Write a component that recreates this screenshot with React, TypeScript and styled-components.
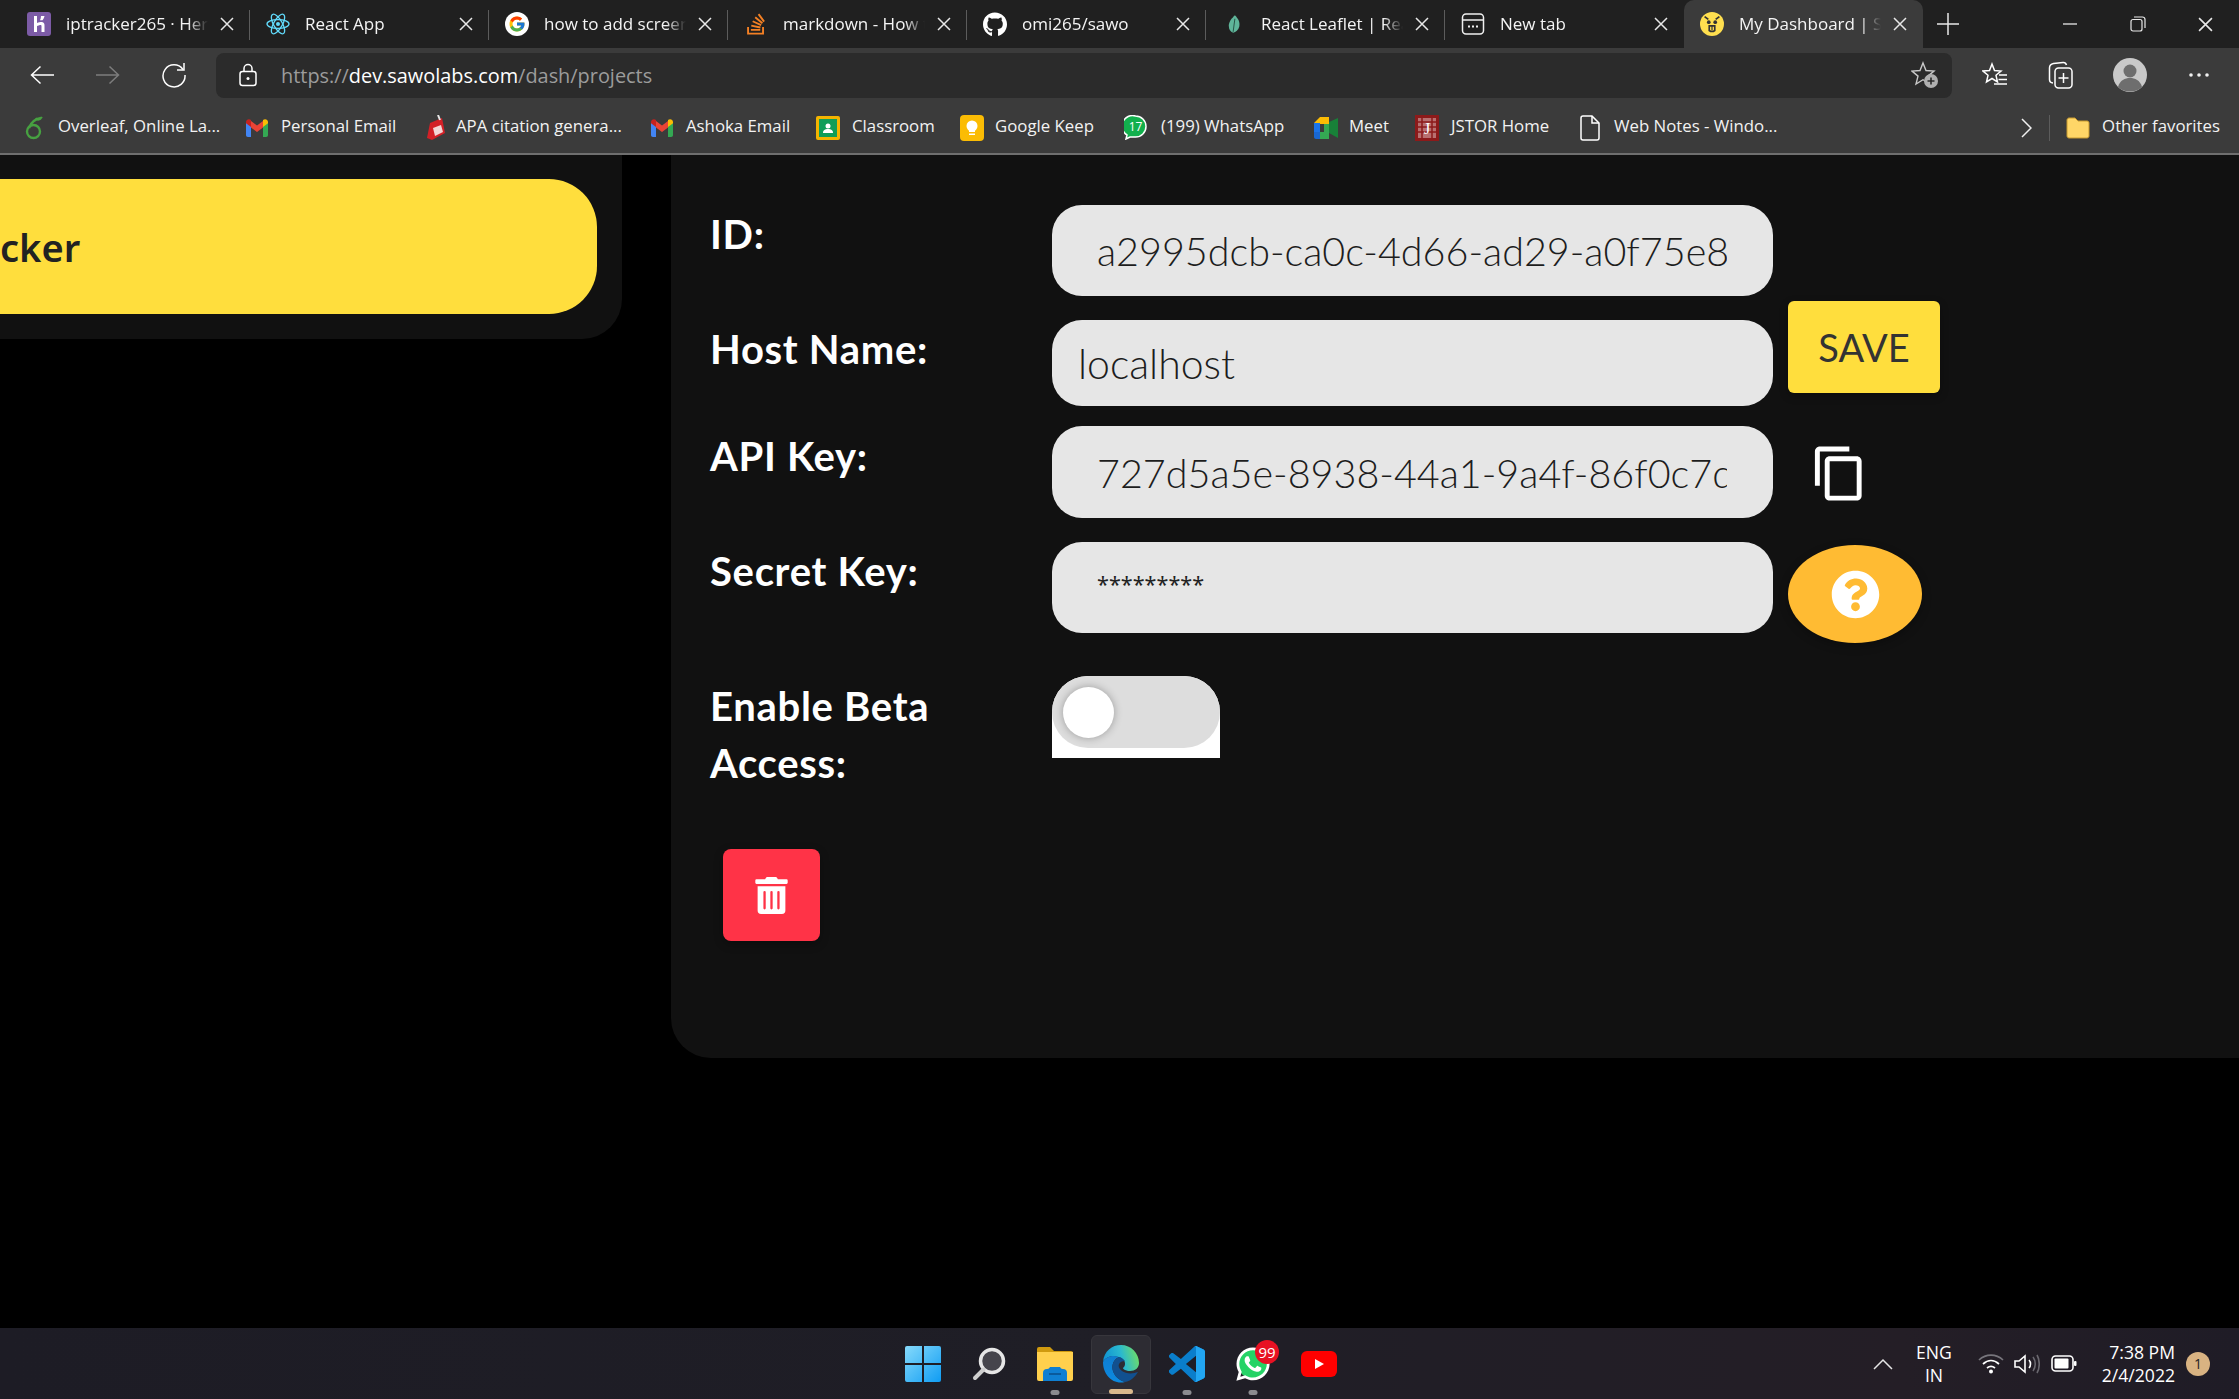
import React from "react";
import styled, { createGlobalStyle } from "styled-components";
import { FaGithub, FaQuestionCircle, FaStackOverflow, FaTrashAlt, FaWhatsapp } from "react-icons/fa";
import { MdContentCopy } from "react-icons/md";

const Global = createGlobalStyle`
  html, body { margin: 0; padding: 0; background: #000; }
  * { box-sizing: border-box; }
`;

const UI = `"Open Sans", "Noto Sans", sans-serif`;
const ROUND = `Lato, "Noto Sans", sans-serif`;

const Page = styled.div`
  width: 2239px;
  height: 1399px;
  display: flex;
  flex-direction: column;
  overflow: hidden;
  background: #000;
  font-family: ${UI};
`;

/* browser chrome */
const TabStrip = styled.div`
  height: 48px;
  display: flex;
  align-items: stretch;
  padding-left: 11px;
  background: #202020;
`;
const Tab = styled.div<{ $active?: boolean; $sep?: boolean }>`
  position: relative;
  width: 239px;
  flex: none;
  display: flex;
  align-items: center;
  padding-left: 16px;
  background: ${(p) => (p.$active ? "#3b3b3b" : "transparent")};
  border-radius: 10px 10px 0 0;
  &::after {
    content: "";
    display: ${(p) => (p.$sep ? "block" : "none")};
    position: absolute;
    right: 0;
    top: 10px;
    height: 30px;
    width: 1px;
    background: #5c5c5c;
  }
`;
const TabIcon = styled.span`
  width: 24px;
  height: 24px;
  flex: none;
  margin-right: 15px;
  display: flex;
  align-items: center;
  justify-content: center;
`;
const TabTitle = styled.span`
  width: 142px;
  flex: none;
  margin-top: -1px;
  overflow: hidden;
  white-space: nowrap;
  font-size: 17px;
  color: #f4f4f4;
  -webkit-mask-image: linear-gradient(to right, #000 86%, transparent 100%);
  mask-image: linear-gradient(to right, #000 86%, transparent 100%);
`;
const CloseBox = styled.span`
  width: 38px;
  flex: none;
  display: flex;
  justify-content: center;
  align-items: center;
`;
const NewTab = styled.div`
  width: 50px;
  display: flex;
  align-items: center;
  justify-content: center;
`;
const WindowControls = styled.div`
  margin-left: auto;
  display: flex;
`;
const WindowBtn = styled.div`
  width: 67.5px;
  display: flex;
  align-items: center;
  justify-content: center;
`;

const Toolbar = styled.div`
  height: 56px;
  display: flex;
  align-items: center;
  padding: 0 0 2px 9px;
  background: #3b3b3b;
`;
const ToolBtn = styled.div<{ $ml?: number }>`
  width: 66px;
  height: 45px;
  flex: none;
  margin-left: ${(p) => p.$ml ?? 0}px;
  display: flex;
  align-items: center;
  justify-content: center;
`;
const Address = styled.div`
  width: 1736px;
  height: 45px;
  flex: none;
  margin: 0 10px 0 9px;
  display: flex;
  align-items: center;
  padding: 0 13px 0 23px;
  background: #2b2b2b;
  border-radius: 8px;
`;
const UrlText = styled.div`
  margin-left: 24px;
  font-size: 19.9px;
  color: #9c9c9c;
  white-space: nowrap;
  & b {
    font-weight: 400;
    color: #fff;
  }
`;
const StarSlot = styled.span`
  margin-left: auto;
  display: flex;
`;

const Bookmarks = styled.div`
  height: 51px;
  display: flex;
  align-items: center;
  padding: 0 0 2px 24px;
  background: #3b3b3b;
  border-bottom: 2px solid #6f6f6f;
`;
const Bookmark = styled.div<{ $w: number; $g: number }>`
  width: ${(p) => p.$w}px;
  flex: none;
  display: flex;
  align-items: center;
  gap: ${(p) => p.$g}px;
  font-size: 16.8px;
  color: #f2f2f2;
  white-space: nowrap;
  & > span {
    margin-top: -4px;
  }
`;
const BookmarkEnd = styled.div`
  margin-left: auto;
  display: flex;
  align-items: center;
  padding-right: 19px;
  font-size: 16.8px;
  color: #f2f2f2;
  white-space: nowrap;
`;
const BarDivider = styled.span`
  width: 1px;
  height: 26px;
  margin: 0 16px 0 17px;
  background: #5c5c5c;
`;
const OtherLabel = styled.span`
  margin: -4px 0 0 12px;
`;

/* page body */
const Body = styled.main`
  flex: 1;
  min-height: 0;
  display: flex;
  align-items: flex-start;
  background: #000;
`;
const SidePanel = styled.aside`
  width: 622px;
  height: 184px;
  flex: none;
  padding: 24px 25px 25px 0;
  background: #111;
  border-radius: 0 0 40px 0;
`;
const ProjectBtn = styled.div`
  height: 135px;
  display: flex;
  align-items: center;
  background: #ffde3d;
  border-radius: 0 48px 48px 0;
  font-family: "Noto Sans", sans-serif;
  font-weight: 600;
  font-size: 38px;
  color: #222;
`;
const Panel = styled.section`
  margin-left: 49px;
  flex: 1;
  height: 903px;
  padding: 50px 0 0 39px;
  background: #111;
  border-radius: 0 0 0 40px;
`;
const Row = styled.div<{ $top: number; $h: number }>`
  display: grid;
  grid-template-columns: 327px 721px auto;
  column-gap: 15px;
  align-items: start;
  height: ${(p) => p.$h}px;
  margin-top: ${(p) => p.$top}px;
`;
const Label = styled.div<{ $offset: number }>`
  margin-top: ${(p) => p.$offset}px;
  font-family: ${ROUND};
  font-weight: 700;
  font-size: 40px;
  letter-spacing: 0.7px;
  line-height: 57px;
  color: #fff;
`;
const Field = styled.input<{ $offset?: number; $h: number; $pad: number; $size?: number }>`
  display: block;
  width: 721px;
  height: ${(p) => p.$h}px;
  margin-top: ${(p) => p.$offset ?? 0}px;
  padding: 0 46px 0 ${(p) => p.$pad}px;
  border: none;
  outline: none;
  border-radius: 30px;
  background: #e6e6e6;
  font-family: ${ROUND};
  font-weight: 300;
  font-size: ${(p) => p.$size ?? 39.5}px;
  color: #1d1d1d;
`;
const SecretField = styled(Field)`
  padding-bottom: 8px;
  font-family: "Noto Sans", sans-serif;
  font-weight: 400;
  font-size: 21.6px;
  color: #222;
`;
const SaveBtn = styled.button`
  width: 152px;
  height: 92px;
  border: none;
  border-radius: 6px;
  background: #ffde3d;
  font-family: ${ROUND};
  font-weight: 400;
  font-size: 38px;
  color: #333;
  box-shadow: 0 3px 8px rgba(0, 0, 0, 0.3);
`;
const CopyBtn = styled.div`
  margin: 18px 0 0 22px;
  color: #fff;
  display: flex;
`;
const HelpBtn = styled.div`
  width: 134px;
  height: 98px;
  margin-top: 3px;
  display: flex;
  align-items: center;
  justify-content: center;
  border-radius: 50%;
  background: #ffbb33;
  color: #fff;
  box-shadow: 0 3px 10px rgba(0, 0, 0, 0.3);
`;
const SwitchBase = styled.div`
  width: 168px;
  height: 82px;
  background: #fff;
  border-radius: 36px 36px 0 0;
`;
const SwitchTrack = styled.div`
  height: 72px;
  padding: 11px 0 0 11px;
  background: #ddd;
  border-radius: 36px;
`;
const SwitchKnob = styled.div`
  width: 51px;
  height: 51px;
  border-radius: 50%;
  background: #fff;
  box-shadow: 0 0 8px rgba(0, 0, 0, 0.3);
`;
const DeleteBtn = styled.div`
  width: 97px;
  height: 92px;
  margin: 56px 0 0 13px;
  display: flex;
  align-items: center;
  justify-content: center;
  border-radius: 8px;
  background: #ff3347;
  color: #fff;
  box-shadow: 0 3px 10px rgba(0, 0, 0, 0.3);
`;

/* taskbar */
const Taskbar = styled.footer`
  height: 71px;
  flex: none;
  display: flex;
  align-items: center;
  padding: 0 29px 0 890px;
  background: linear-gradient(90deg, #1d1c25 0%, #1f1e26 50%, #241e26 85%, #1f1c26 100%);
`;
const Slot = styled.div<{ $active?: boolean }>`
  position: relative;
  width: 66px;
  height: 59px;
  margin-top: 1px;
  flex: none;
  display: flex;
  align-items: center;
  justify-content: center;
  &::before {
    content: "";
    display: ${(p) => (p.$active ? "block" : "none")};
    position: absolute;
    inset: 0 3px;
    background: #2d2c33;
    border: 1px solid #37363c;
    border-radius: 6px;
  }
  & > svg {
    position: relative;
  }
`;
const WaStack = styled.span`
  position: relative;
  width: 38px;
  height: 38px;
  & > svg {
    position: absolute;
    left: 0;
    top: 0;
  }
`;
const RunDot = styled.span<{ $active?: boolean }>`
  position: absolute;
  left: 50%;
  bottom: ${(p) => (p.$active ? 0 : -1)}px;
  width: ${(p) => (p.$active ? 24 : 9)}px;
  height: 5px;
  transform: translateX(-50%);
  border-radius: 3px;
  background: ${(p) => (p.$active ? "#d9b98c" : "#8b8b8f")};
`;
const CountBadge = styled.span`
  position: absolute;
  right: 7px;
  top: 5px;
  width: 24px;
  height: 24px;
  display: flex;
  align-items: center;
  justify-content: center;
  border-radius: 50%;
  background: #e81123;
  font-size: 15px;
  color: #fff;
`;
const Tray = styled.div`
  margin-left: auto;
  display: flex;
  align-items: center;
  color: #fff;
`;
const TrayIcon = styled.div<{ $w: number; $ml: number }>`
  width: ${(p) => p.$w}px;
  margin-left: ${(p) => p.$ml}px;
  display: flex;
  justify-content: center;
`;
const TrayText = styled.div<{ $align: string; $w: number; $ml: number }>`
  width: ${(p) => p.$w}px;
  margin-left: ${(p) => p.$ml}px;
  text-align: ${(p) => p.$align};
  font-size: 17.6px;
  line-height: 23px;
  color: #fff;
  white-space: nowrap;
`;
const NoticeBadge = styled.div`
  width: 24px;
  height: 24px;
  margin-left: 11px;
  display: flex;
  align-items: center;
  justify-content: center;
  border-radius: 50%;
  background: #d9b382;
  font-size: 14px;
  color: #222;
`;

/* drawings */
const X = ({ size = 14, color = "#e8e8e8" }: { size?: number; color?: string }) => (
  <svg width={size} height={size} viewBox="0 0 14 14" fill="none" stroke={color} strokeWidth="1.5">
    <path d="M1 1l12 12M13 1L1 13" />
  </svg>
);
const Heroku = () => (
  <svg width="24" height="24" viewBox="0 0 24 24">
    <rect width="24" height="24" rx="3" fill="#7c5ba6" />
    <path d="M7 4h3v7c2-.8 4-1.2 5-1 2 .3 2.5 2 2.5 3.500V20h-3v-6c0-1-.5-1.300-1.500-1-.8.2-2 .6-3 1v6H7zM14 4h3.500c-.2 1.500-1 3-2 4.200H13c.6-1.300 1-2.800 1-4.200z" fill="#fff" />
  </svg>
);
const ReactLogo = ({ size = 24 }: { size?: number }) => (
  <svg width={size} height={size} viewBox="0 0 24 24" fill="none" stroke="#61dafb" strokeWidth="1.300">
    <circle cx="12" cy="12" r="2" fill="#61dafb" stroke="none" />
    <ellipse cx="12" cy="12" rx="11" ry="4.300" />
    <ellipse cx="12" cy="12" rx="11" ry="4.300" transform="rotate(60 12 12)" />
    <ellipse cx="12" cy="12" rx="11" ry="4.300" transform="rotate(120 12 12)" />
  </svg>
);
const GoogleBadge = () => (
  <svg width="24" height="24" viewBox="0 0 24 24">
    <circle cx="12" cy="12" r="12" fill="#fff" />
    <svg x="3" y="3" width="18" height="18" viewBox="0 0 48 48">
      <path fill="#FFC107" d="M43.600 20H24v8h11.300C33.700 32.700 29.200 36 24 36c-6.600 0-12-5.400-12-12s5.400-12 12-12c3 0 5.800 1.100 7.900 3l5.700-5.700C34 6 29.300 4 24 4 13 4 4 13 4 24s9 20 20 20 20-9 20-20c0-1.300-.1-2.700-.4-4z" />
      <path fill="#FF3D00" d="M6.300 14.700l6.600 4.800C14.700 15.100 19 12 24 12c3 0 5.800 1.100 7.900 3l5.700-5.700C34 6 29.300 4 24 4 16.300 4 9.700 8.300 6.300 14.700z" />
      <path fill="#4CAF50" d="M24 44c5.200 0 9.900-2 13.400-5.200l-6.200-5.200C29.200 35.100 26.700 36 24 36c-5.200 0-9.600-3.300-11.300-8l-6.500 5C9.500 39.600 16.200 44 24 44z" />
      <path fill="#1976D2" d="M43.600 20H24v8h11.300c-.8 2.200-2.200 4.200-4.100 5.600l6.200 5.200C37 39.200 44 34 44 24c0-1.300-.1-2.700-.4-4z" />
    </svg>
  </svg>
);
const Leaf = () => (
  <svg width="14" height="20" viewBox="0 0 16 22">
    <path d="M9 1c4 4 6 8 5 13-1 4-4 6-7 7-3-1-5-4-5-8 0-5 4-9 7-12z" fill="#5fb59a" />
    <path d="M9 5L7 20" stroke="#20463c" strokeWidth="1" />
  </svg>
);
const NewTabIcon = () => (
  <svg width="24" height="24" viewBox="0 0 24 24" fill="none" stroke="#f0f0f0" strokeWidth="1.500">
    <rect x="1.500" y="2" width="21" height="20" rx="3.500" />
    <path d="M2 8h20" />
    <path d="M7 14.500h2M11 14.500h2M15 14.500h2" strokeWidth="2" />
  </svg>
);
const DogFace = () => (
  <svg width="26" height="26" viewBox="0 0 26 26">
    <circle cx="13" cy="13" r="13" fill="#ffdf4f" />
    <path d="M5 5l4 3M21 5l-4 3" stroke="#333" strokeWidth="2" />
    <circle cx="9.500" cy="11" r="2" fill="#333" />
    <circle cx="16.500" cy="11" r="2" fill="#333" />
    <path d="M10 15h6v5c-2 1.500-4 1.500-6 0z" fill="none" stroke="#333" strokeWidth="1.800" />
    <path d="M13 14v6" stroke="#333" strokeWidth="1.300" />
  </svg>
);
const ArrowLeft = ({ color = "#fff", flip = false }: { color?: string; flip?: boolean }) => (
  <svg width="24" height="20" viewBox="0 0 24 20" fill="none" stroke={color} strokeWidth="1.500" style={flip ? { transform: "scaleX(-1)" } : undefined}>
    <path d="M24 10H1.500M10.500 1.500L1.500 10l9 8.500" />
  </svg>
);
const Reload = () => (
  <svg width="26" height="26" viewBox="0 0 26 26" fill="none" stroke="#fff" strokeWidth="1.500">
    <path d="M22 7.500A11 11 0 1 0 24 13" />
    <path d="M23 1v7h-7" />
  </svg>
);
const Lock = () => (
  <svg width="18" height="24" viewBox="0 0 18 24" fill="none" stroke="#fff" strokeWidth="1.500">
    <rect x="1" y="8.500" width="16" height="14" rx="2.500" />
    <path d="M5 8.500V5.500a4 4 0 0 1 8 0v3" />
    <circle cx="9" cy="15.500" r="1.500" fill="#fff" stroke="none" />
  </svg>
);
const StarPlus = () => (
  <svg width="28" height="28" viewBox="0 0 28 28" fill="none">
    <path d="M12 2l3 7.500 8 .6-6 5 2 7.900-7-4.300-7 4.300 2-7.900-6-5 8-.6z" stroke="#c8c8c8" strokeWidth="1.400" />
    <circle cx="20" cy="20" r="7" fill="#b0b0b0" />
    <path d="M20 16.500v7M16.500 20h7" stroke="#2b2b2b" strokeWidth="1.600" />
  </svg>
);
const Favorites = () => (
  <svg width="26" height="26" viewBox="0 0 26 26" fill="none" stroke="#fff" strokeWidth="1.500">
    <path d="M10 2l2.500 6.500 6.500.5-5 4.300 1.500 6.700-5.500-3.500-5.500 3.500 1.500-6.700-5-4.300 6.500-.5z" />
    <path d="M17 13h8M16.500 17.500h8.500M12 22h13" />
  </svg>
);
const Collections = () => (
  <svg width="26" height="28" viewBox="0 0 26 28" fill="none" stroke="#fff" strokeWidth="1.500">
    <path d="M5 22c-2.200-.2-3.500-1.500-3.500-3.500V7c0-2.500 1.500-4 4-4.500L15 1.500c2-.2 3 .8 3.500 2.500" />
    <rect x="7" y="7" width="17" height="20" rx="3.500" />
    <path d="M15.500 12v10M10.500 17h10" />
  </svg>
);
const Profile = () => (
  <svg width="34" height="34" viewBox="0 0 34 34">
    <circle cx="17" cy="17" r="17" fill="#c9c9c9" />
    <circle cx="17" cy="13" r="6.500" fill="#6e6e6e" />
    <path d="M5 29c2-7 7-9 12-9s10 2 12 9c-6 6-18 6-24 0z" fill="#6e6e6e" />
  </svg>
);
const Overleaf = () => (
  <svg width="20" height="24" viewBox="0 0 20 24" fill="none" stroke="#47a141" strokeWidth="2.400">
    <path d="M17 2c-6 1-10 4-12 10" />
    <circle cx="9.500" cy="15.500" r="6.500" />
    <path d="M12 2c1 2 3 3 6-1" strokeWidth="2" />
  </svg>
);
const Gmail = () => (
  <svg width="22" height="18" viewBox="0 0 22 18">
    <path d="M0 3v13c0 1 .7 2 2 2h3V7z" fill="#4285f4" />
    <path d="M17 7v11h3c1.300 0 2-1 2-2V3z" fill="#34a853" />
    <path d="M5 8.500l6 4.500 6-4.500V2l-6 4.500L5 2z" fill="#ea4335" />
    <path d="M0 3c0-2.500 3-3.700 5-2v7L0 4.300z" fill="#c5221f" />
    <path d="M17 1c2-1.700 5-.5 5 2v1.300L17 8z" fill="#fbbc04" />
  </svg>
);
const ApaIcon = () => (
  <svg width="22" height="26" viewBox="0 0 22 26">
    <path d="M6 8L18 3l3 15-13 7-5-2z" fill="#d32027" />
    <path d="M9 13l8-3 2 7-8 4z" fill="#f3d6d6" />
    <path d="M14 0l2 5" stroke="#e6e6e6" strokeWidth="2" />
  </svg>
);
const Classroom = () => (
  <svg width="24" height="24" viewBox="0 0 24 24">
    <rect width="24" height="24" rx="2" fill="#f4b400" />
    <rect x="3" y="3" width="18" height="18" fill="#0f9d58" />
    <circle cx="12" cy="10" r="2.500" fill="#fff" />
    <path d="M7 17c0-3 2-4 5-4s5 1 5 4z" fill="#fff" />
  </svg>
);
const Keep = () => (
  <svg width="24" height="26" viewBox="0 0 24 26">
    <rect width="24" height="26" rx="4" fill="#fbbc04" />
    <circle cx="12" cy="11" r="5.500" fill="#fff" />
    <rect x="9" y="14" width="6" height="3" fill="#fff" />
    <rect x="9" y="18.500" width="6" height="1.500" fill="#fff" />
  </svg>
);
const WaSmall = () => (
  <svg width="23" height="25" viewBox="0 0 23 25">
    <path d="M11.500 1a10.500 10.500 0 0 1 0 21H6l-4 2 1-4A10.500 10.500 0 0 1 11.500 1z" fill="#12b04d" stroke="#fff" strokeWidth="1.500" />
    <text x="11.500" y="16" textAnchor="middle" fontSize="12" fill="#fff" fontFamily="Open Sans">17</text>
  </svg>
);
const MeetIcon = () => (
  <svg width="24" height="24" viewBox="0 0 24 24">
    <path d="M0 7l6-6h9v7H6v0z" fill="#fbbc04" />
    <path d="M0 7h6v9H0z" fill="#1a73e8" />
    <path d="M0 16h6v7H2c-1 0-2-1-2-2z" fill="#1967d2" />
    <path d="M6 16h9v7H6z" fill="#34a853" />
    <path d="M15 1v7H6V1z" fill="#fbbc04" />
    <path d="M15 6l9-4v20l-9-5z" fill="#188038" />
    <path d="M10 8h5v8h-5z" fill="#34a853" />
  </svg>
);
const Jstor = () => (
  <svg width="24" height="26" viewBox="0 0 24 26">
    <rect width="24" height="26" fill="#8c1a1a" />
    <path d="M3 3h18v20H3z" fill="#b87070" />
    <path d="M3 7h18M3 12h18M3 17h18M7 3v20M17 3v20" stroke="#8c1a1a" strokeWidth="1.500" />
    <text x="12" y="19" textAnchor="middle" fontSize="16" fill="#fff" fontFamily="Liberation Serif">J</text>
  </svg>
);
const DocIcon = () => (
  <svg width="20" height="26" viewBox="0 0 20 26" fill="none" stroke="#fff" strokeWidth="1.500">
    <path d="M3 1h9l7 7v15a2 2 0 0 1-2 2H3a2 2 0 0 1-2-2V3a2 2 0 0 1 2-2z" />
    <path d="M12 1v7h7" />
  </svg>
);
const Folder = () => (
  <svg width="24" height="22" viewBox="0 0 24 22">
    <path d="M1 3c0-1 1-2 2-2h6l3 3h9c1.500 0 2 1 2 2v13c0 1-1 2-2 2H3c-1 0-2-1-2-2z" fill="#ffd667" stroke="#c89a2e" strokeWidth="1" />
  </svg>
);
const WinLogo = () => (
  <svg width="36" height="36" viewBox="0 0 36 36">
    <defs>
      <linearGradient id="win" x1="0" y1="0" x2="1" y2="1">
        <stop offset="0" stopColor="#86dafb" />
        <stop offset="1" stopColor="#0f9cf3" />
      </linearGradient>
    </defs>
    <path d="M2 0h15v17H0V2a2 2 0 0 1 2-2zM19 0h15a2 2 0 0 1 2 2v15H19zM0 19h17v17H2a2 2 0 0 1-2-2zM19 19h17v15a2 2 0 0 1-2 2H19z" fill="url(#win)" />
  </svg>
);
const SearchIcon = () => (
  <svg width="34" height="34" viewBox="0 0 34 34" fill="none">
    <circle cx="20" cy="14" r="11.500" fill="#46454c" stroke="#e6e6e6" strokeWidth="3.500" />
    <path d="M11.500 22.500L3 31" stroke="#cfcfcf" strokeWidth="4" strokeLinecap="round" />
  </svg>
);
const Explorer = () => (
  <svg width="36" height="34" viewBox="0 0 36 34">
    <path d="M0 2a2 2 0 0 1 2-2h11l4 4h17a2 2 0 0 1 2 2v4H0z" fill="#d09a0f" />
    <path d="M0 5h36v27a2 2 0 0 1-2 2H2a2 2 0 0 1-2-2z" fill="#ffd04d" />
    <path d="M6 34V26a4 4 0 0 1 4-4 3 3 0 0 0 3-2h10a3 3 0 0 0 3 2 4 4 0 0 1 4 4v8z" fill="#0f7fd2" />
    <path d="M12 27h12" stroke="#0a5a9c" strokeWidth="2" />
  </svg>
);
const Edge = () => (
  <svg width="36" height="38" viewBox="0 0 36 38">
    <defs>
      <linearGradient id="edgeTop" x1="0" y1="0.700" x2="1" y2="0.500">
        <stop offset="0" stopColor="#0c8fd3" />
        <stop offset="0.550" stopColor="#2ab8cf" />
        <stop offset="1" stopColor="#6ddc6a" />
      </linearGradient>
      <linearGradient id="edgeLow" x1="0" y1="0" x2="0" y2="1">
        <stop offset="0" stopColor="#0f7dd0" />
        <stop offset="1" stopColor="#0c8ae0" />
      </linearGradient>
    </defs>
    <path d="M0 17C1 6 9 0 18 0c10 0 18 8 18 18 0 5-4 8-9 8-4 0-7-2-7-3 3-2 3-8-2-10C11 10 3 11 0 17z" fill="url(#edgeTop)" />
    <path d="M0 17C3 11 11 10 16 12c-5 2-8 8-6 14 1.500 5 6 9 12 11C10 40 0 30 0 17z" fill="url(#edgeLow)" />
    <path d="M16 12c-5 2-8 8-6 14 1.500 5 6 9 12 11 6-1 10-5 13-10-5 2-12 2-16-1-3-2-4-5-3-7 1-2 3-3 6-3-2-2-4-4-6-4z" fill="#11508f" />
  </svg>
);
const VsCode = () => (
  <svg width="36" height="38" viewBox="0 0 100 100">
    <path d="M71 99c2 1 4 1 6 0l19-9c2-1 4-4 4-6V16c0-2-2-5-4-6L77 1c-2-1-5-1-7 1L33 36 12 20c-2-1-4-1-6 0L1 25c-2 2-2 5 0 7l18 18L1 67c-2 2-2 5 0 7l5 5c2 1 4 1 6 0l21-16z" fill="#0a7ecb" />
    <path d="M71 99c2 1 4 1 6 0l19-9c2-1 4-4 4-6V16c0-2-2-5-4-6L77 1c-2-1-5-1-7 1 3-3 5 0 5 3v90c0 3-2 5-4 4z" fill="#22a6f2" />
    <path d="M75 27v46L47 50z" fill="#1e1d26" />
  </svg>
);
const YouTube = () => (
  <svg width="36" height="26" viewBox="0 0 36 26">
    <rect width="36" height="26" rx="6" fill="#f00" />
    <path d="M14 8l9 5-9 5z" fill="#fff" />
  </svg>
);
const Wifi = () => (
  <svg width="26" height="22" viewBox="0 0 26 22" fill="none" stroke="#fff" strokeWidth="1.700">
    <path d="M1 7c7-6.500 17-6.500 24 0" stroke="#77757c" />
    <path d="M5 11c5-4.500 11-4.500 16 0M9 15c2.500-2 5.500-2 8 0" />
    <circle cx="13" cy="18.500" r="2" fill="#fff" stroke="none" />
  </svg>
);
const Volume = () => (
  <svg width="26" height="22" viewBox="0 0 26 22" fill="none" stroke="#fff" strokeWidth="1.600">
    <path d="M1 8h4l6-5v16l-6-5H1z" />
    <path d="M15 7c2 2 2 6 0 8" />
    <path d="M19 4c3 4 3 10 0 14M23 2c3 5 3 13 0 18" stroke="#6a686f" />
  </svg>
);
const Battery = () => (
  <svg width="26" height="18" viewBox="0 0 26 18" fill="none">
    <rect x="1" y="1" width="21" height="15" rx="3.500" stroke="#fff" strokeWidth="1.600" />
    <rect x="3.500" y="3.500" width="14" height="10" rx="1" fill="#fff" />
    <rect x="23" y="6" width="2.500" height="5" rx="1" fill="#fff" />
  </svg>
);
const Chevron = () => (
  <svg width="20" height="12" viewBox="0 0 20 12" fill="none" stroke="#e6e6e6" strokeWidth="1.500">
    <path d="M1 11l9-9 9 9" />
  </svg>
);

const tabs = [
  { title: "iptracker265 · Heroku", icon: <Heroku /> },
  { title: "React App", icon: <ReactLogo /> },
  { title: "how to add screenshots", icon: <GoogleBadge /> },
  { title: "markdown - How to add", icon: <FaStackOverflow size={24} color="#f48024" /> },
  { title: "omi265/sawo", icon: <FaGithub size={25} color="#fff" /> },
  { title: "React Leaflet | React", icon: <Leaf /> },
  { title: "New tab", icon: <NewTabIcon /> },
  { title: "My Dashboard | Sawo", icon: <DogFace />, active: true },
];

const marks = [
  { w: 222, g: 14, icon: <Overleaf />, text: "Overleaf, Online La..." },
  { w: 178, g: 13, icon: <Gmail />, text: "Personal Email" },
  { w: 227, g: 10, icon: <ApaIcon />, text: "APA citation genera..." },
  { w: 165, g: 13, icon: <Gmail />, text: "Ashoka Email" },
  { w: 144, g: 12, icon: <Classroom />, text: "Classroom" },
  { w: 164, g: 11, icon: <Keep />, text: "Google Keep" },
  { w: 190, g: 14, icon: <WaSmall />, text: "(199) WhatsApp" },
  { w: 101, g: 11, icon: <MeetIcon />, text: "Meet" },
  { w: 165, g: 12, icon: <Jstor />, text: "JSTOR Home" },
  { w: 210, g: 14, icon: <DocIcon />, text: "Web Notes - Windo..." },
];

export default function App() {
  return (
    <Page>
      <Global />
      <TabStrip>
        {tabs.map((t, i) => (
          <Tab key={t.title} $active={t.active} $sep={i < 6}>
            <TabIcon>{t.icon}</TabIcon>
            <TabTitle>{t.title}</TabTitle>
            <CloseBox>
              <X />
            </CloseBox>
          </Tab>
        ))}
        <NewTab>
          <svg width="22" height="22" viewBox="0 0 22 22" stroke="#e8e8e8" strokeWidth="1.500">
            <path d="M11 0v22M0 11h22" />
          </svg>
        </NewTab>
        <WindowControls>
          <WindowBtn>
            <svg width="14" height="2" viewBox="0 0 14 2">
              <path d="M0 1h14" stroke="#e8e8e8" strokeWidth="1.300" />
            </svg>
          </WindowBtn>
          <WindowBtn>
            <svg width="16" height="16" viewBox="0 0 16 16" fill="none" stroke="#e8e8e8" strokeWidth="1.200">
              <rect x="1" y="3.500" width="11" height="11.500" rx="2" />
              <path d="M4 1h8.500A2.500 2.500 0 0 1 15 3.500V12" />
            </svg>
          </WindowBtn>
          <WindowBtn>
            <X size={15} />
          </WindowBtn>
        </WindowControls>
      </TabStrip>

      <Toolbar>
        <ToolBtn>
          <ArrowLeft />
        </ToolBtn>
        <ToolBtn>
          <ArrowLeft color="#7d7d7d" flip />
        </ToolBtn>
        <ToolBtn>
          <Reload />
        </ToolBtn>
        <Address>
          <Lock />
          <UrlText>
            https://<b>dev.sawolabs.com</b>/dash/projects
          </UrlText>
          <StarSlot>
            <StarPlus />
          </StarSlot>
        </Address>
        <ToolBtn>
          <Favorites />
        </ToolBtn>
        <ToolBtn>
          <Collections />
        </ToolBtn>
        <ToolBtn $ml={3}>
          <Profile />
        </ToolBtn>
        <ToolBtn $ml={3}>
          <svg width="20" height="4" viewBox="0 0 20 4" fill="#f0f0f0">
            <circle cx="2" cy="2" r="1.800" />
            <circle cx="10" cy="2" r="1.800" />
            <circle cx="18" cy="2" r="1.800" />
          </svg>
        </ToolBtn>
      </Toolbar>

      <Bookmarks>
        {marks.map((m) => (
          <Bookmark key={m.text} $w={m.w} $g={m.g}>
            {m.icon}
            <span>{m.text}</span>
          </Bookmark>
        ))}
        <BookmarkEnd>
          <svg width="11" height="20" viewBox="0 0 11 20" fill="none" stroke="#f0f0f0" strokeWidth="1.500">
            <path d="M1 1l9 9-9 9" />
          </svg>
          <BarDivider />
          <Folder />
          <OtherLabel>Other favorites</OtherLabel>
        </BookmarkEnd>
      </Bookmarks>

      <Body>
        <SidePanel>
          <ProjectBtn>cker</ProjectBtn>
        </SidePanel>
        <Panel>
          <Row $top={0} $h={91}>
            <Label $offset={1}>ID:</Label>
            <Field readOnly value="a2995dcb-ca0c-4d66-ad29-a0f75e8c4b21" $h={91} $pad={45} />
          </Row>
          <Row $top={5} $h={105}>
            <Label $offset={20}>Host Name:</Label>
            <Field readOnly value="localhost" $offset={19} $h={86} $pad={26} $size={41} />
            <SaveBtn>SAVE</SaveBtn>
          </Row>
          <Row $top={20} $h={92}>
            <Label $offset={2}>API Key:</Label>
            <Field readOnly value="727d5a5e-8938-44a1-9a4f-86f0c7dbe312" $h={92} $pad={45} />
            <CopyBtn>
              <MdContentCopy size={59} />
            </CopyBtn>
          </Row>
          <Row $top={24} $h={101}>
            <Label $offset={1}>Secret Key:</Label>
            <SecretField readOnly value="*********" $h={91} $pad={45} />
            <HelpBtn>
              <FaQuestionCircle size={49} />
            </HelpBtn>
          </Row>
          <Row $top={33} $h={117}>
            <Label $offset={2}>
              Enable Beta
              <br />
              Access:
            </Label>
            <SwitchBase>
              <SwitchTrack>
                <SwitchKnob />
              </SwitchTrack>
            </SwitchBase>
          </Row>
          <DeleteBtn>
            <FaTrashAlt size={37} />
          </DeleteBtn>
        </Panel>
      </Body>

      <Taskbar>
        <Slot>
          <WinLogo />
        </Slot>
        <Slot>
          <SearchIcon />
        </Slot>
        <Slot>
          <Explorer />
          <RunDot />
        </Slot>
        <Slot $active>
          <Edge />
          <RunDot $active />
        </Slot>
        <Slot>
          <VsCode />
          <RunDot />
        </Slot>
        <Slot>
          <WaStack>
            <svg width="38" height="38" viewBox="0 0 38 38">
              <circle cx="19" cy="19" r="15" fill="#25d366" />
            </svg>
            <FaWhatsapp size={38} color="#fff" />
          </WaStack>
          <CountBadge>99</CountBadge>
          <RunDot />
        </Slot>
        <Slot>
          <YouTube />
        </Slot>
        <Tray>
          <TrayIcon $w={34} $ml={0}>
            <Chevron />
          </TrayIcon>
          <TrayText $align="center" $w={40} $ml={14}>
            ENG
            <br />
            IN
          </TrayText>
          <TrayIcon $w={34} $ml={20}>
            <Wifi />
          </TrayIcon>
          <TrayIcon $w={35} $ml={1}>
            <Volume />
          </TrayIcon>
          <TrayIcon $w={34} $ml={3}>
            <Battery />
          </TrayIcon>
          <TrayText $align="right" $w={94} $ml={0}>
            7:38 PM
            <br />
            2/4/2022
          </TrayText>
          <NoticeBadge>1</NoticeBadge>
        </Tray>
      </Taskbar>
    </Page>
  );
}
